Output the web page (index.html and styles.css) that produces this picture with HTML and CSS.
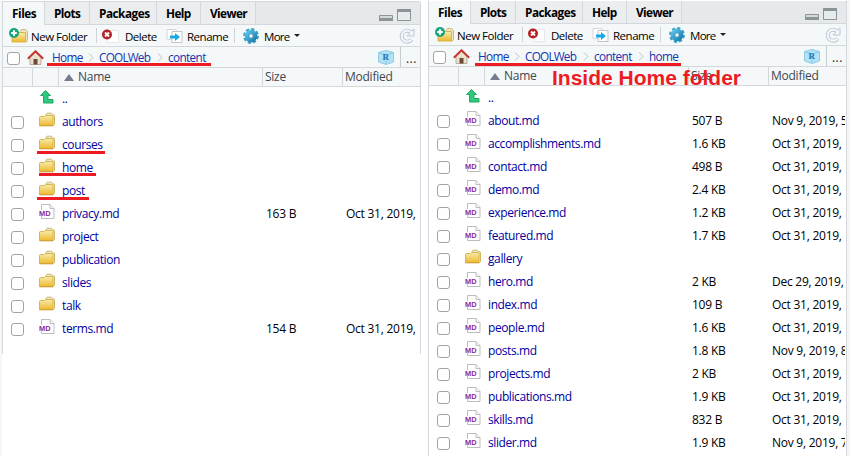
FILE: index.html
```
<!DOCTYPE html>
<html lang="en">
<head>
<meta charset="utf-8">
<title>Files</title>
<link rel="stylesheet" href="styles.css">
</head>
<body>
<svg width="0" height="0" class="defs">
  <defs>
    <linearGradient id="gold" x1="0" y1="0" x2="0" y2="1"><stop offset="0" stop-color="#f6ecae"/><stop offset="1" stop-color="#efb92e"/></linearGradient>
    <linearGradient id="blue" x1="0" y1="0" x2="1" y2="1"><stop offset="0" stop-color="#5ac3e6"/><stop offset="1" stop-color="#1b7fae"/></linearGradient>
    <symbol id="folder" viewBox="0 0 16 15"><path d="M6.5 3.500 8 1.200h4.500l1 1.300 2 .8v9.200l-2 1.500" fill="#e9e6dc" stroke="#d0b765"/><path d="M.5 5.500q0-1 1-1h4l1-1h6.500q1 0 1 1v9H.5z" fill="url(#gold)" stroke="#d9b54a"/><path d="M.5 13.800h13.500" stroke="#cf9c35"/></symbol>
    <symbol id="md" viewBox="0 0 16 15"><path d="M2.500 6V.5h8.500l4 4v10H2.500V12" fill="#fff" stroke="#bdbdbd"/><path d="M11 .5v4h4" fill="#f4f4f4" stroke="#bdbdbd"/><text x="0" y="12" class="md-label" textLength="11.500" lengthAdjust="spacingAndGlyphs">MD</text></symbol>
    <symbol id="up" viewBox="0 0 14 14"><path d="M5.500.5.5 5.500h3V13h9.500V9.500H8v-4h2.500z" fill="#2fc87d" stroke="#1fa866"/></symbol>
    <symbol id="newfolder" viewBox="0 0 20 15"><path d="M11 3.500 12.500 1.500h4l2 2v9l-1.500 2" fill="#eee6c8" stroke="#d0b765"/><path d="M3 4.500h13.500v9.500H3z" fill="url(#gold)" stroke="#d9b54a"/><circle cx="5" cy="5" r="5" fill="#1ba37b"/><path d="M5 2.200v5.600M2.200 5h5.600" stroke="#fff" stroke-width="2"/></symbol>
    <symbol id="delete" viewBox="0 0 17 14"><path d="M5.500 1.500h11v12h-11z" fill="#fff" stroke="#e5e7e8"/><circle cx="5" cy="5.500" r="5" fill="#b81f24"/><path d="m3 3.500 4 4m0-4-4 4" stroke="#fff" stroke-width="1.800"/></symbol>
    <symbol id="rename" viewBox="0 0 17 14"><path d="M1 .5h9v10H1z" fill="#fff" stroke="#d3d7d9"/><path d="M6 2.500h10v11H6z" fill="#fff" stroke="#c1c5c8"/><path d="M4 6.500h5V4L14 8l-5 4V9.500H4z" fill="#18a8e4"/></symbol>
    <symbol id="gear" viewBox="0 0 16 16"><circle cx="8" cy="8" r="6.600" fill="none" stroke="#3b9cc4" stroke-width="2.600" stroke-dasharray="3.100 2.084"/><circle cx="8" cy="8" r="4.300" fill="none" stroke="url(#blue)" stroke-width="4.200"/><circle cx="8" cy="8" r="2.200" fill="#eaf7fc" stroke="#207da8" stroke-width=".7"/></symbol>
    <symbol id="refresh" viewBox="0 0 16 16"><path d="M12.600 11.500A5.500 5.500 0 1 1 12 4.200" fill="none" stroke="#bdc5d4" stroke-width="4"/><path d="M15 .8v7.200H8z" fill="#f2f5fa" stroke="#bdc5d4"/><path d="M12.400 11.800A5.500 5.500 0 1 1 12 4.200l1 1" fill="none" stroke="#f2f5fa" stroke-width="2.200"/></symbol>
    <symbol id="house" viewBox="0 0 17 15"><path d="M3 7v7.500h11V7L8.500 2z" fill="#e7e1d2" stroke="#a89f8b" stroke-width=".8"/><path d="M6.500 9h4v5.500h-4z" fill="#6f4938"/><path d="M.8 8.700 8.500 1.200l7.700 7.500" fill="none" stroke="#c7322a" stroke-width="1.900"/></symbol>
    <symbol id="cube" viewBox="0 0 16 15"><path d="M.5 2.500 8 .5l7.500 2v9.500L8 14.500.5 12z" fill="#b2e2f5" stroke="#8fcce7"/><path d="m1 3 7 2 7-2M8 5v9" fill="none" stroke="#86cae8"/><text x="4.500" y="10" class="cube-label">R</text></symbol>
    <symbol id="chev" viewBox="0 0 6 9"><path d="m1 .5 4 4-4 4" fill="none" stroke="#b9c0c5"/></symbol>
    <symbol id="winmin" viewBox="0 0 14 6"><path d="M.5.5h13v5H.5z" fill="#d4d9db" stroke="#8b9498"/><path d="M0 3h14v3H0z" fill="#8b9498"/></symbol>
    <symbol id="winmax" viewBox="0 0 14 12"><path d="M.5.5h13v11H.5z" fill="#e6ebed" stroke="#8b9498"/><path d="M0 0h14v3H0z" fill="#8b9498"/></symbol>
  </defs>
</svg>
<main class="stage">
  <section class="pane pane-left">
    <nav class="tabs">
      <b class="tab on t1">Files</b><b class="tab t2">Plots</b><b class="tab t3">Packages</b><b class="tab t4">Help</b><b class="tab t5">Viewer</b>
      <span class="win"><svg class="wmin"><use href="#winmin"/></svg><svg class="wmax"><use href="#winmax"/></svg></span>
    </nav>
    <div class="toolbar">
      <svg class="i-new"><use href="#newfolder"/></svg><span class="l-new">New Folder</span><i class="sep"></i>
      <svg class="i-del"><use href="#delete"/></svg><span class="l-del">Delete</span>
      <svg class="i-ren"><use href="#rename"/></svg><span class="l-ren">Rename</span><i class="sep"></i>
      <svg class="i-gear"><use href="#gear"/></svg><span class="l-more">More</span><i class="caret"></i>
      <svg class="i-ref"><use href="#refresh"/></svg>
    </div>
    <div class="path">
      <i class="box"></i><svg class="i-home"><use href="#house"/></svg>
      <span class="c-home">Home</span><svg class="chev"><use href="#chev"/></svg><span class="c-web">COOLWeb</span><svg class="chev"><use href="#chev"/></svg><span class="c-content">content</span>
      <svg class="i-cube"><use href="#cube"/></svg><span class="dots">...</span>
    </div>
    <div class="head"><span></span><span></span><span class="h-name"><i class="sort"></i>Name</span><span>Size</span><span>Modified</span></div>
    <div class="rows">
      <div class="row"><span></span><svg class="upi"><use href="#up"/></svg><a>..</a></div>
      <div class="row"><i class="box"></i><svg class="ico"><use href="#folder"/></svg><a>authors</a></div>
      <div class="row"><i class="box"></i><svg class="ico"><use href="#folder"/></svg><a>courses</a></div>
      <div class="row"><i class="box"></i><svg class="ico"><use href="#folder"/></svg><a>home</a></div>
      <div class="row"><i class="box"></i><svg class="ico"><use href="#folder"/></svg><a>post</a></div>
      <div class="row"><i class="box"></i><svg class="ico"><use href="#md"/></svg><a>privacy.md</a><span>163 B</span><span class="date">Oct 31, 2019,</span></div>
      <div class="row"><i class="box"></i><svg class="ico"><use href="#folder"/></svg><a>project</a></div>
      <div class="row"><i class="box"></i><svg class="ico"><use href="#folder"/></svg><a>publication</a></div>
      <div class="row"><i class="box"></i><svg class="ico"><use href="#folder"/></svg><a>slides</a></div>
      <div class="row"><i class="box"></i><svg class="ico"><use href="#folder"/></svg><a>talk</a></div>
      <div class="row"><i class="box"></i><svg class="ico"><use href="#md"/></svg><a>terms.md</a><span>154 B</span><span class="date">Oct 31, 2019,</span></div>
    </div>
  </section>
  <section class="pane pane-right">
    <nav class="tabs">
      <b class="tab on t1">Files</b><b class="tab t2">Plots</b><b class="tab t3">Packages</b><b class="tab t4">Help</b><b class="tab t5">Viewer</b>
      <span class="win"><svg class="wmin"><use href="#winmin"/></svg><svg class="wmax"><use href="#winmax"/></svg></span>
    </nav>
    <div class="toolbar">
      <svg class="i-new"><use href="#newfolder"/></svg><span class="l-new">New Folder</span><i class="sep"></i>
      <svg class="i-del"><use href="#delete"/></svg><span class="l-del">Delete</span>
      <svg class="i-ren"><use href="#rename"/></svg><span class="l-ren">Rename</span><i class="sep"></i>
      <svg class="i-gear"><use href="#gear"/></svg><span class="l-more">More</span><i class="caret"></i>
      <svg class="i-ref"><use href="#refresh"/></svg>
    </div>
    <div class="path">
      <i class="box"></i><svg class="i-home"><use href="#house"/></svg>
      <span class="c-home">Home</span><svg class="chev"><use href="#chev"/></svg><span class="c-web">COOLWeb</span><svg class="chev"><use href="#chev"/></svg><span class="c-content">content</span><svg class="chev"><use href="#chev"/></svg><span>home</span>
      <svg class="i-cube"><use href="#cube"/></svg><span class="dots">...</span>
    </div>
    <div class="head"><span></span><span></span><span class="h-name"><i class="sort"></i>Name</span><span>Size</span><span>Modified</span></div>
    <div class="rows">
      <div class="row"><span></span><svg class="upi"><use href="#up"/></svg><a>..</a></div>
      <div class="row"><i class="box"></i><svg class="ico"><use href="#md"/></svg><a>about.md</a><span>507 B</span><span class="date">Nov 9, 2019, 5</span></div>
      <div class="row"><i class="box"></i><svg class="ico"><use href="#md"/></svg><a>accomplishments.md</a><span>1.6 KB</span><span class="date">Oct 31, 2019,</span></div>
      <div class="row"><i class="box"></i><svg class="ico"><use href="#md"/></svg><a>contact.md</a><span>498 B</span><span class="date">Oct 31, 2019,</span></div>
      <div class="row"><i class="box"></i><svg class="ico"><use href="#md"/></svg><a>demo.md</a><span>2.4 KB</span><span class="date">Oct 31, 2019,</span></div>
      <div class="row"><i class="box"></i><svg class="ico"><use href="#md"/></svg><a>experience.md</a><span>1.2 KB</span><span class="date">Oct 31, 2019,</span></div>
      <div class="row"><i class="box"></i><svg class="ico"><use href="#md"/></svg><a>featured.md</a><span>1.7 KB</span><span class="date">Oct 31, 2019,</span></div>
      <div class="row"><i class="box"></i><svg class="ico"><use href="#folder"/></svg><a>gallery</a></div>
      <div class="row"><i class="box"></i><svg class="ico"><use href="#md"/></svg><a>hero.md</a><span>2 KB</span><span class="date">Dec 29, 2019,</span></div>
      <div class="row"><i class="box"></i><svg class="ico"><use href="#md"/></svg><a>index.md</a><span>109 B</span><span class="date">Oct 31, 2019,</span></div>
      <div class="row"><i class="box"></i><svg class="ico"><use href="#md"/></svg><a>people.md</a><span>1.6 KB</span><span class="date">Oct 31, 2019,</span></div>
      <div class="row"><i class="box"></i><svg class="ico"><use href="#md"/></svg><a>posts.md</a><span>1.8 KB</span><span class="date">Nov 9, 2019, 8</span></div>
      <div class="row"><i class="box"></i><svg class="ico"><use href="#md"/></svg><a>projects.md</a><span>2 KB</span><span class="date">Oct 31, 2019,</span></div>
      <div class="row"><i class="box"></i><svg class="ico"><use href="#md"/></svg><a>publications.md</a><span>1.9 KB</span><span class="date">Oct 31, 2019,</span></div>
      <div class="row"><i class="box"></i><svg class="ico"><use href="#md"/></svg><a>skills.md</a><span>832 B</span><span class="date">Oct 31, 2019,</span></div>
      <div class="row"><i class="box"></i><svg class="ico"><use href="#md"/></svg><a>slider.md</a><span>1.9 KB</span><span class="date">Nov 9, 2019, 7</span></div>
    </div>
  </section>
  <i class="mark m-path1"></i><i class="mark m-courses"></i><i class="mark m-home"></i><i class="mark m-post"></i><i class="mark m-path2"></i>
  <strong class="note">Inside Home folder</strong>
</main>
</body>
</html>
```
FILE: styles.css
```
* { box-sizing: border-box; }
body { margin: 0; background: #fff; font: 12px "Open Sans", "Noto Sans", sans-serif; color: #000; }
.defs { position: absolute; }
svg { display: block; flex: none; }
.stage { position: relative; width: 850px; height: 456px; overflow: hidden; display: flex; align-items: flex-start; gap: 7px; padding-left: 2px; background: linear-gradient(90deg, #f4f7f8 2px, #fff 2px 847px, #f4f5f6 847px); }
.pane { width: 419px; flex: none; background: #fff; border: 1px solid #d4d8dc; border-bottom: 0; overflow: hidden; letter-spacing: -.25px; }
.pane-left { margin-top: 1px; height: 353px; border-top-right-radius: 3px; }
.pane-right { height: 456px; border-top-color: #fff; }

.tabs { height: 23px; display: flex; background: #e6e8ea; border-bottom: 1px solid #d4d8dc; }
.tab { height: 22px; padding-left: 9px; line-height: 23px; border-right: 1px solid #d4d8dc; background: #ebedef; white-space: nowrap; font-size: 11.800px; letter-spacing: -.6px; }
.tab.on { height: 23px; background: #f4f8f9; }
.t1 { width: 42px; letter-spacing: -.45px; }
.t2 { width: 45px; }
.t3 { width: 67px; letter-spacing: -.5px; }
.t4 { width: 44px; }
.t5 { width: 55px; }
.win { margin-left: auto; display: flex; align-items: flex-end; gap: 4px; height: 19px; padding-right: 9px; }
.wmin { width: 14px; height: 6px; }
.wmax { width: 14px; height: 12px; }

.toolbar { height: 22px; display: flex; align-items: center; background: #f4f8f9; border-bottom: 1px solid #d4d8dc; padding-left: 6px; white-space: nowrap; line-height: 20px; font-size: 11.500px; letter-spacing: -.48px; }
.toolbar span { padding-top: 2px; }
.i-new { width: 20px; height: 15px; margin-right: 2px; }
.l-new { width: 65px; }
.sep { width: 1px; height: 15px; background: #cfd3d6; flex: none; }
.i-del { width: 17px; height: 14px; margin: 0 6px 0 5px; }
.l-del { width: 41px; }
.i-ren { width: 17px; height: 14px; margin-right: 4px; }
.l-ren { width: 47px; }
.i-gear { width: 16px; height: 16px; margin: 0 5px 0 8px; }
.l-more { width: 30px; letter-spacing: -.7px; }
.caret { border: 3px solid transparent; border-top-color: #222; border-bottom: 0; }
.i-ref { width: 16px; height: 16px; margin-left: auto; margin-right: 5px; }

.path { height: 21px; display: flex; align-items: center; background: #f4f8f9; border-bottom: 1px solid #d4d8dc; padding-left: 4px; color: #1433ad; white-space: nowrap; line-height: 20px; font-size: 11.800px; }
.box { display: block; flex: none; width: 13px; height: 13px; border: 1px solid #a3a3a3; border-radius: 3px; background: #fff; }
.path .box { margin-top: 2px; }
.i-home { width: 17px; height: 15px; margin: 0 8px 0 7px; }
.c-home { width: 36px; letter-spacing: -.65px; }
.c-web { width: 58px; letter-spacing: -.8px; }
.c-content { width: 44px; letter-spacing: -.65px; }
.c-content + .chev + span { letter-spacing: -.65px; }
.chev { width: 6px; height: 9px; margin-right: 5px; margin-top: 1px; }
.i-cube { width: 16px; height: 15px; margin-left: auto; margin-right: 6px; }
.path .dots { width: 20px; height: 20px; border-left: 1px solid #c5cace; padding-left: 5px; color: #222; line-height: 23px; letter-spacing: .5px; }
.cube-label { font: bold 9px "Liberation Serif", serif; fill: #2175b5; }

.head { height: 19px; display: grid; grid-template-columns: 30px 26px 204px 80px 77px; background: #f4f8f9; border-bottom: 1px solid #d4d8dc; color: #40474d; line-height: 18px; }
.head span { border-right: 1px solid #d4d8dc; padding-left: 2px; }
.head span:last-child { border: 0; }
.head .h-name { display: flex; align-items: center; padding-left: 5px; }
.sort { border: 5px solid transparent; border-bottom: 7px solid #747d8c; border-top: 0; margin-right: 4px; }

.row { height: 23px; display: grid; grid-template-columns: 28px 23px 204px 80px 73px; padding-left: 8px; align-items: center; line-height: 23px; }
.row .box { margin-top: 2px; }
.row a { color: #00009f; letter-spacing: -.4px; }
.row > * { white-space: nowrap; }
.ico { width: 16px; height: 15px; margin-top: -4px; }
.upi { width: 14px; height: 14px; margin: -3px 0 0 1px; }
.date { overflow: hidden; }
.md-label { font: bold 8px "Liberation Sans", sans-serif; fill: #8a2b91; letter-spacing: 0; }

.mark { position: absolute; height: 3px; background: #ed1c24; }
.m-path1 { left: 47px; top: 63px; width: 164px; }
.m-courses { left: 37px; top: 151px; width: 68px; }
.m-home { left: 39px; top: 173px; width: 57px; }
.m-post { left: 37px; top: 197px; width: 52px; }
.m-path2 { left: 475px; top: 63px; width: 206px; }
.note { position: absolute; left: 552px; top: 66px; font: bold 21px/23px "Liberation Sans", sans-serif; color: #ed1c24; white-space: nowrap; }
```
